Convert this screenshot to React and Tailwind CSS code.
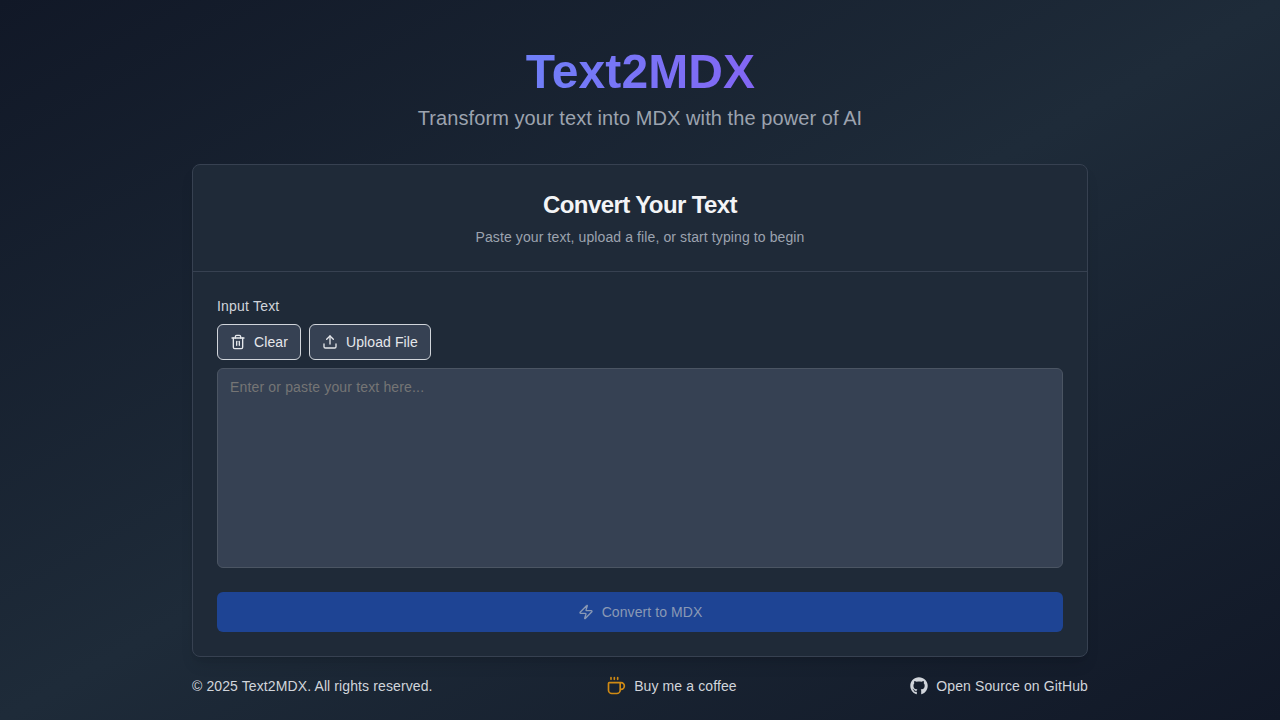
import React from "react";
import { Trash2, Upload, Zap, Coffee } from "lucide-react";
import { FaGithub } from "react-icons/fa";

export default function App() {
  return (
    <div className="min-h-screen h-[720px] overflow-hidden bg-gradient-to-br from-[#111827] via-[#1e2b39] to-[#111827] font-['Liberation_Sans',Arial,sans-serif] antialiased">
      <div className="w-[896px] mx-auto flex flex-col">
        <header className="pt-[44px] text-center">
          <h1 className="text-5xl leading-[56px] font-bold tracking-[0.1px] pl-[1px] text-transparent bg-clip-text bg-gradient-to-r from-[#6f7ff8] to-[#8266f4] w-fit mx-auto">Text2MDX</h1>
          <p className="text-xl leading-7 tracking-[0.08px] text-[#9ca3af] mt-1">Transform your text into MDX with the power of AI</p>
        </header>
        <main className="mt-[32px] h-[493px] rounded-lg border border-[#374151] bg-[#1f2a38] shadow-lg flex flex-col">
          <div className="h-[107px] border-b border-[#374151] flex flex-col items-center pt-6">
            <h2 className="text-2xl leading-8 font-bold text-[#f3f4f6] tracking-[-0.6px]">Convert Your Text</h2>
            <p className="text-sm leading-5 tracking-[0.107px] text-[#9ca3af] mt-1.5">Paste your text, upload a file, or start typing to begin</p>
          </div>
          <div className="p-6 flex flex-col">
            <label className="text-sm leading-5 tracking-[0.2px] font-medium text-[#d1d5db] h-[20px]">Input Text</label>
            <div className="flex gap-2 mt-2">
              <button className="h-9 px-3 rounded-md border border-[#d1d5db] bg-[#364153] text-[#e5e7eb] text-sm flex items-center gap-2">
                <Trash2 className="w-4 h-4" />
                <span className="tracking-[0.1px]">Clear</span>
              </button>
              <button className="h-9 px-3 rounded-md border border-[#d1d5db] bg-[#364153] text-[#e5e7eb] text-sm flex items-center gap-2">
                <Upload className="w-4 h-4" />
                <span className="tracking-[0.1px]">Upload File</span>
              </button>
            </div>
            <textarea
              className="mt-2 h-[200px] w-full resize-none rounded-md border border-[#4b5563] bg-[#364153] px-3 py-2 text-sm leading-5 tracking-[0.16px] text-[#e5e7eb] placeholder:text-[#757575] outline-none"
              placeholder="Enter or paste your text here..."
            />
            <button className="mt-6 h-10 rounded-md bg-[#1e4494] text-[#8a99b5] text-sm tracking-[0.08px] flex items-center justify-center gap-2">
              <Zap className="w-4 h-4" />
              Convert to MDX
            </button>
          </div>
        </main>
        <footer className="mt-[19px] h-5 flex items-center justify-between text-sm tracking-[0.11px] text-[#d1d5db]">
          <span>© 2025 Text2MDX. All rights reserved.</span>
          <a className="flex items-center gap-2">
            <Coffee className="w-5 h-5 text-[#d08a14]" />
            Buy me a coffee
          </a>
          <a className="flex items-center gap-2">
            <FaGithub className="w-[18px] h-[18px] text-[#d1d5db]" />
            Open Source on GitHub
          </a>
        </footer>
      </div>
    </div>
  );
}
